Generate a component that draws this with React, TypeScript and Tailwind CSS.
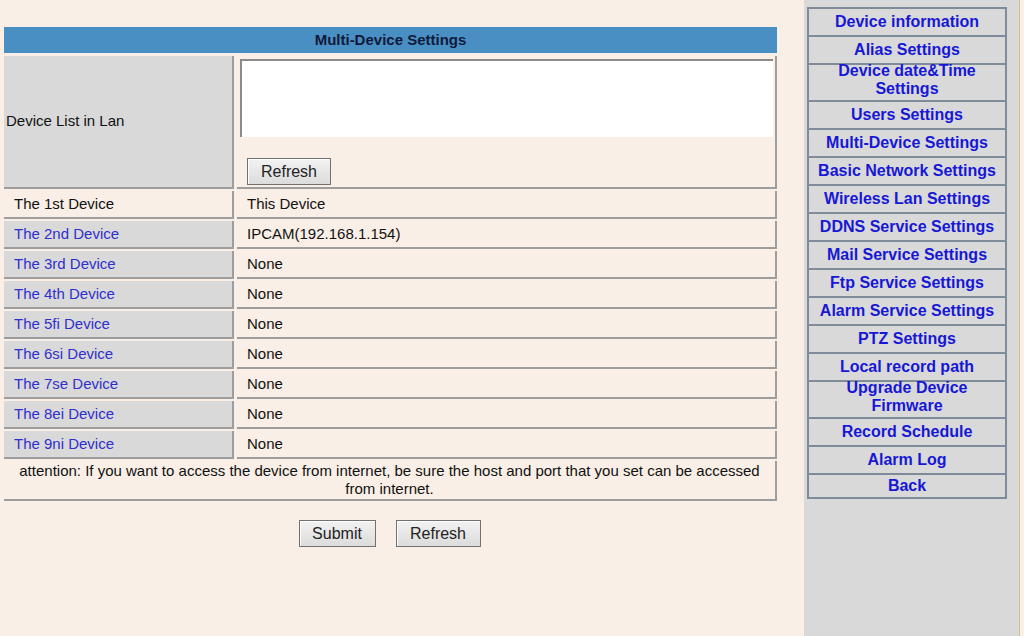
import React from 'react';

const devices = [
  { label: 'The 1st Device', value: 'This Device', first: true },
  { label: 'The 2nd Device', value: 'IPCAM(192.168.1.154)' },
  { label: 'The 3rd Device', value: 'None' },
  { label: 'The 4th Device', value: 'None' },
  { label: 'The 5fi Device', value: 'None' },
  { label: 'The 6si Device', value: 'None' },
  { label: 'The 7se Device', value: 'None' },
  { label: 'The 8ei Device', value: 'None' },
  { label: 'The 9ni Device', value: 'None' },
];

const menu: { text: string[] }[] = [
  { text: ['Device information'] },
  { text: ['Alias Settings'] },
  { text: ['Device date&Time', 'Settings'] },
  { text: ['Users Settings'] },
  { text: ['Multi-Device Settings'] },
  { text: ['Basic Network Settings'] },
  { text: ['Wireless Lan Settings'] },
  { text: ['DDNS Service Settings'] },
  { text: ['Mail Service Settings'] },
  { text: ['Ftp Service Settings'] },
  { text: ['Alarm Service Settings'] },
  { text: ['PTZ Settings'] },
  { text: ['Local record path'] },
  { text: ['Upgrade Device', 'Firmware'] },
  { text: ['Record Schedule'] },
  { text: ['Alarm Log'] },
  { text: ['Back'] },
];

function OldButton({ children, w }: { children: React.ReactNode; w: string }) {
  return (
    <button
      className={`${w} h-[27px] border border-[#707070] bg-gradient-to-b from-[#f2f2f2] to-[#dcdcdc] text-[16px] text-[#222] leading-none shadow-[inset_1px_1px_0_#fff]`}
    >
      {children}
    </button>
  );
}

export default function App() {
  return (
    <div
      className="w-[1024px] h-[636px] bg-[#f9efe6] flex overflow-hidden"
      style={{ fontFamily: '"Liberation Sans", Arial, sans-serif' }}
    >
      {/* main settings table */}
      <div className="w-[804px] pt-[27px] pl-[4px]">
        <div className="w-[773px] flex flex-col gap-[2px] text-[15px] text-[#111]">
          <div className="h-[26px] bg-[#4a8fc4] flex items-center justify-center font-bold text-[#0f1a3a]">
            Multi-Device Settings
          </div>

          <div className="flex gap-[3px] h-[133px] mt-[1px]">
            <div className="w-[230px] bg-[#d9d9d9] border-r-2 border-b-2 border-[#9d9d9d] flex items-center pl-[2px]">
              Device List in Lan
            </div>
            <div className="flex-1 border-r-2 border-b-2 border-[#9d9d9d] pt-[3px] pl-[3px] pr-[2px]">
              <div className="h-[78px] bg-white border-t-2 border-l-2 border-[#8a8a8a]" />
              <div className="pl-[7px] pt-[21px]">
                <OldButton w="w-[84px]">Refresh</OldButton>
              </div>
            </div>
          </div>

          {devices.map((d) => (
            <div key={d.label} className="flex gap-[3px] h-[28px]">
              <div
                className={`w-[230px] border-r-2 border-b-2 border-[#9d9d9d] flex items-center pl-[10px] ${
                  d.first ? 'text-[#111]' : 'bg-[#d9d9d9] text-[#2f2fcf]'
                }`}
              >
                {d.label}
              </div>
              <div className="flex-1 border-r-2 border-b-2 border-[#9d9d9d] flex items-center pl-[10px]">
                {d.value}
              </div>
            </div>
          ))}

          <div className="h-[40px] border-r-2 border-b-2 border-[#9d9d9d] flex items-center justify-center text-center text-[15px] leading-[18px] whitespace-nowrap">
            <span>
              attention: If you want to access the device from internet, be sure the host and port that you set can be accessed
              <br />
              from internet.
            </span>
          </div>
        </div>

        <div className="w-[773px] flex justify-center gap-[20px] mt-[19px] pr-[2px]">
          <OldButton w="w-[77px]">Submit</OldButton>
          <OldButton w="w-[85px]">Refresh</OldButton>
        </div>
      </div>

      {/* side menu */}
      <div className="w-[216px] h-full bg-[#d9d9d9] border-r border-[#d3c17c] pt-[7px] pl-[3px]">
        <div className="w-[200px] border-2 border-[#7f8b99] flex flex-col">
          {menu.map((m, i) => {
            const last = i === menu.length - 1;
            const double = m.text.length > 1;
            return (
              <div
                key={i}
                className={`flex flex-col items-center font-bold text-[16px] leading-[18px] text-[#1717d6] ${
                  double ? 'h-[37px] justify-start' : last ? 'h-[22px] justify-center' : 'h-[28px] justify-center'
                } ${last ? '' : 'border-b-2 border-[#7f8b99]'}`}
              >
                <div className={`flex flex-col items-center ${double ? '-mt-[3px]' : ''}`}>
                  {m.text.map((t) => (
                    <span key={t}>{t}</span>
                  ))}
                </div>
              </div>
            );
          })}
        </div>
      </div>
    </div>
  );
}
